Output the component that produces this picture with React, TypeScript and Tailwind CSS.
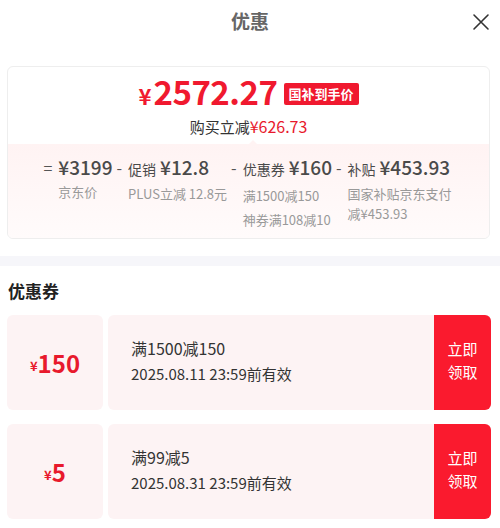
import React from "react";

// coupon rows shown under 优惠券
const coupons = [
  { amount: "150", rule: "满1500减150", expire: "2025.08.11 23:59前有效" },
  { amount: "5", rule: "满99减5", expire: "2025.08.31 23:59前有效" },
];

const font = { fontFamily: '"Noto Sans CJK SC", "Noto Sans", sans-serif' };

const App: React.FC = () => {
  return (
    <div className="w-[500px] h-[528px] bg-white overflow-hidden" style={font}>
      {/* header */}
      <div className="relative h-[44px] flex items-center justify-center">
        <h1 className="text-[19px] font-bold text-[#666] leading-none -mt-[4px]">优惠</h1>
        <button className="absolute right-[10px] top-[13px] w-[18px] h-[18px]">
          <svg viewBox="0 0 18 18" width="18" height="18">
            <path d="M2 2 L16 16 M16 2 L2 16" stroke="#333" strokeWidth="1.6" strokeLinecap="round" />
          </svg>
        </button>
      </div>

      {/* price summary card */}
      <div className="mt-[22px] ml-[7px] mr-[10px] rounded-md border border-[#eeeeee] overflow-hidden">
        <div className="h-[77px] flex flex-col items-center pt-[6px]">
          <div className="flex items-center gap-[6px] h-[40px]">
            <div className="flex items-baseline text-[#f0192f] font-bold">
              <span className="text-[22px] leading-[38px] mr-[2px]">¥</span>
              <span className="text-[33px] leading-[38px] tracking-[-0.5px]">2572.27</span>
            </div>
            <span className="bg-[#f0192f] text-white text-[13px] font-bold leading-[22px] px-[5px] rounded-[2px] mt-[1px]">
              国补到手价
            </span>
          </div>
          <div className="mt-[2px] text-[15px] leading-[22px] text-[#333]">
            购买立减<span className="text-[#e8192c] text-[16px]">¥626.73</span>
          </div>
        </div>

        <div className="relative h-[94px] bg-gradient-to-b from-[#fff3f3] to-[#fffbfb] flex justify-center gap-[4px] pt-[9px] pr-[2px]">
          <span className="absolute -top-[4px] left-[241px] w-0 h-0 border-l-[4px] border-r-[4px] border-b-[4px] border-l-transparent border-r-transparent border-b-[#fff3f3]" />
          <Part sign="=" amount="¥3199" lines={["京东价"]} />
          <Part sign="-" label="促销" amount="¥12.8" lines={["PLUS立减 12.8元"]} />
          <Part sign="-" label="优惠券" amount="¥160" lines={["满1500减150", "神券满108减10"]} tall />
          <Part sign="-" label="补贴" amount="¥453.93" lines={["国家补贴京东支付", "减¥453.93"]} />
        </div>
      </div>

      {/* divider band */}
      <div className="mt-[17px] h-[10px] bg-[#f6f6fa]" />

      {/* coupons */}
      <div className="pl-[7px] pr-[9px]">
        <h2 className="text-[17px] font-bold text-[#222] leading-[24px] mt-[13px] ml-[1px]">优惠券</h2>
        <div className="mt-[12px] flex flex-col gap-[14px]">
          {coupons.map((c) => (
            <div key={c.rule} className="flex h-[95px] gap-[5px]">
              <div className="w-[96px] bg-[#fdf3f4] rounded-md flex items-center justify-center text-[#e8192c] font-semibold">
                <span className="text-[13px] leading-none mt-[5px]">¥</span>
                <span className="text-[24px] leading-none">{c.amount}</span>
              </div>
              <div className="flex-1 flex rounded-md overflow-hidden">
                <div className="flex-1 bg-[#fdf3f4] flex flex-col justify-center pl-[23px] pb-[4px] text-[#333]">
                  <div className="text-[16px] leading-[26px]">{c.rule}</div>
                  <div className="text-[15px] leading-[26px]">{c.expire}</div>
                </div>
                <div className="w-[57px] bg-[#fa1a2e] flex flex-col items-center justify-center pb-[6px] text-white text-[15px] leading-[23px]">
                  <span>立即</span>
                  <span>领取</span>
                </div>
              </div>
            </div>
          ))}
        </div>
      </div>
    </div>
  );
};

interface PartProps {
  sign: string;
  label?: string;
  amount: string;
  lines: string[];
  tall?: boolean;
}

// one term of the price breakdown: sign, label + amount, small notes below
const Part: React.FC<PartProps> = ({ sign, label, amount, lines, tall }) => (
  <div className="flex">
    <span className="text-[16px] text-[#555] leading-[28px] mr-[6px]">{sign}</span>
    <div className="flex flex-col">
      <div className="flex items-baseline text-[#4a4a4a] leading-[28px]">
        {label && <span className="text-[14px] mr-[4px]">{label}</span>}
        <span className="text-[19px] font-medium">{amount}</span>
      </div>
      <div className="mt-[1px] text-[13px] text-[#999]">
        {lines.map((l) => (
          <div key={l} className={tall ? "leading-[24px]" : "leading-[20px]"}>
            {l}
          </div>
        ))}
      </div>
    </div>
  </div>
);

export default App;
